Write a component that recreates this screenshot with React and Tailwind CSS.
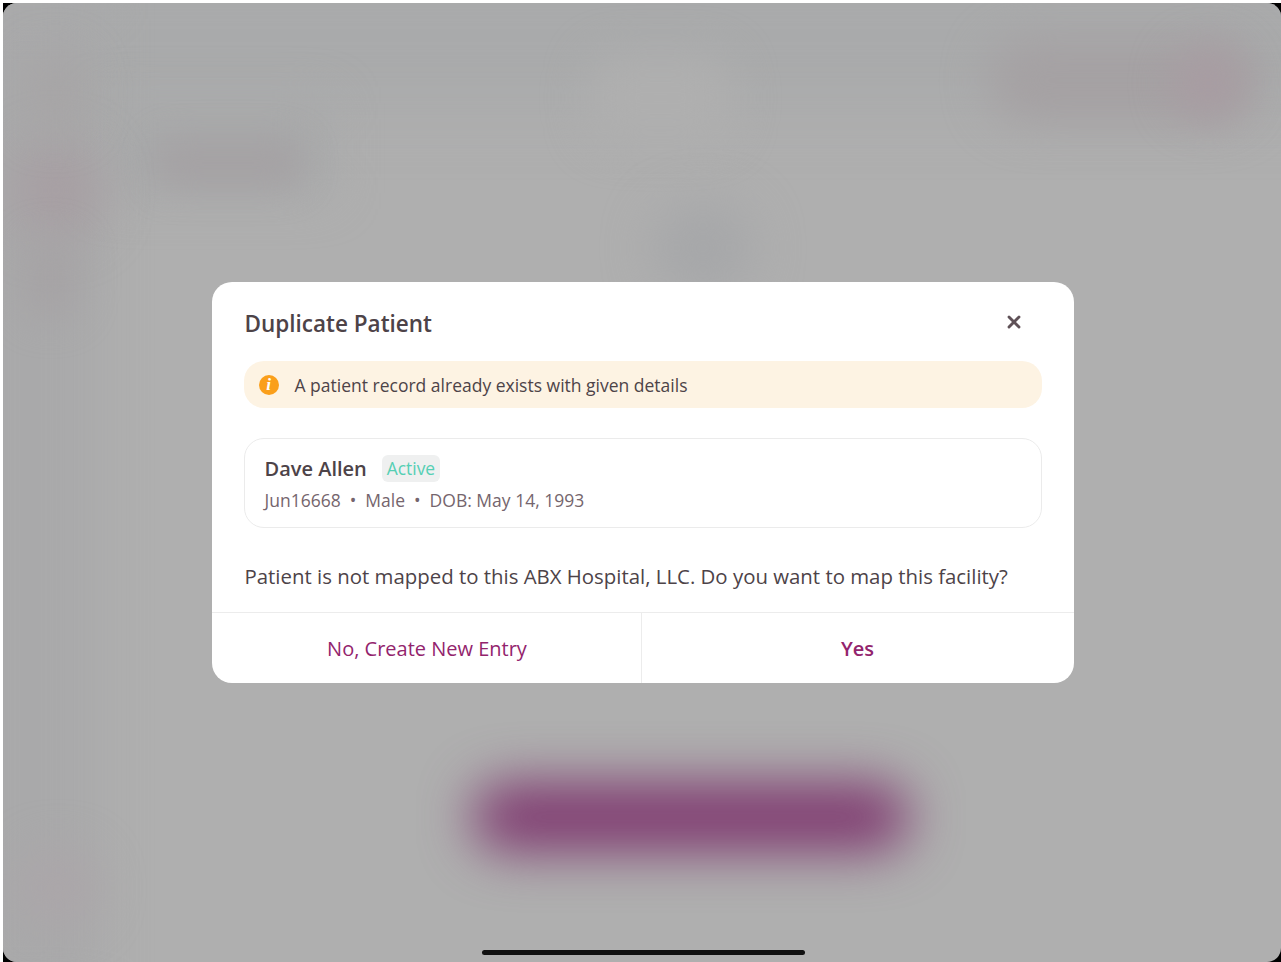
import { X } from 'lucide-react';

function Backdrop() {
	return (
		<div className="absolute inset-0 overflow-hidden">
			{/* Blurred page behind the dialog */}
			<div className="absolute -left-[40px] -top-[40px] h-[145px] w-[1400px] bg-[#a9aaab] blur-[30px]" />
			<div className="absolute left-[585px] top-[50px] h-[90px] w-[145px] rounded-[30px] bg-[#afafaf] blur-[20px]" />
			<div className="absolute -left-[40px] top-0 h-[1000px] w-[135px] bg-[#a9a9aa] blur-[24px]" />
			<div className="absolute left-[100px] top-[100px] h-[90px] w-[225px] bg-[#a8a9aa] blur-[24px]" />
			<div className="absolute left-[150px] top-[135px] h-[50px] w-[150px] rounded-full bg-[#a5a2a4] blur-[16px]" />
			<div className="absolute left-[8px] top-[140px] h-[95px] w-[90px] rounded-full bg-[#a79fa3] blur-[24px]" />
			<div className="absolute left-[22px] top-[50px] h-[80px] w-[60px] rounded-full bg-[#a7a5a6] blur-[20px]" />
			<div className="absolute left-[20px] top-[235px] h-[80px] w-[55px] rounded-full bg-[#a6a3a5] blur-[18px]" />
			<div className="absolute left-[985px] top-[35px] h-[85px] w-[270px] rounded-full bg-[#a5a1a3] blur-[22px]" />
			<div className="absolute left-[1170px] top-[45px] h-[70px] w-[70px] rounded-full bg-[#a89ca2] blur-[20px]" />
			<div className="absolute left-[650px] top-[200px] h-[90px] w-[100px] rounded-full bg-[#a6a7a9] blur-[24px]" />
			<div className="absolute left-[15px] top-[845px] h-[80px] w-[80px] rounded-full bg-[#aba6a9] blur-[22px]" />
			<div className="absolute left-[470px] top-[780px] h-[68px] w-[436px] rounded-full bg-[#7f3a70] blur-[26px]" />
			<div className="absolute bottom-[7px] left-[479px] h-[5px] w-[323px] rounded-full bg-[#111111]" />
		</div>
	);
}

function InfoIcon() {
	return (
		<span className="flex h-5 w-5 shrink-0 items-center justify-center rounded-full bg-[#fa9f1b] font-['Liberation_Serif',serif] text-[17px] font-bold italic leading-none text-white">
			i
		</span>
	);
}

export default function App() {
	return (
		<div className="h-[962px] w-[1281px] overflow-hidden bg-white pl-[3px] pt-[3px] font-['Open_Sans',sans-serif]">
			<div className="h-full w-full bg-black">
				<div className="relative flex h-full w-full items-start justify-center overflow-hidden rounded-[14px] bg-[#afafaf] pl-[1px] pt-[279px]">
					<Backdrop />

					<div className="relative flex h-[401px] w-[862px] flex-col overflow-hidden rounded-[20px] bg-white">
						{/* Header */}
						<div className="flex h-[79px] items-center justify-between pl-[33px] pr-[50px] pt-[2px]">
							<h2 className="pt-[2px] text-[22.5px] font-semibold text-[#4d4348]">
								Duplicate Patient
							</h2>
							<X className="-mt-[1px] h-[20px] w-[20px] text-[#5f5157]" strokeWidth={3.4} />
						</div>

						{/* Warning banner */}
						<div className="mx-[32px] flex h-[47px] items-center gap-[16px] rounded-[20px] bg-[#fdf3e3] pl-[15px] text-[17.5px] text-[#4d4348]">
							<InfoIcon />
							<span className="pt-[1px]">
								A patient record already exists with given details
							</span>
						</div>

						{/* Patient card */}
						<div className="mx-[32px] mt-[30px] flex h-[90px] flex-col justify-center rounded-[20px] border border-[#ebebeb] pl-[20px] pt-[1px]">
							<div className="flex items-center gap-[15px]">
								<span className="text-[20px] font-semibold text-[#4d4348]">
									Dave Allen
								</span>
								<span className="rounded-[6px] bg-[#eff0f0] px-[5px] py-[1px] text-[17.4px] leading-[25px] text-[#55cfb4]">
									Active
								</span>
							</div>
							<div className="mt-[3px] flex items-center text-[17.5px] text-[#75656d]">
								<span>Jun16668</span>
								<span className="px-[9px]">•</span>
								<span>Male</span>
								<span className="px-[9px]">•</span>
								<span>DOB: May 14, 1993</span>
							</div>
						</div>

						<p className="ml-[33px] mt-[33px] whitespace-nowrap text-[20.4px] text-[#4d4348]">
							Patient is not mapped to this ABX Hospital, LLC. Do you want to map
							this facility?
						</p>

						{/* Actions */}
						<div className="mt-auto flex h-[71px] border-t border-[#ececec] text-[20px] text-[#93246d]">
							<button className="w-[430px] border-r border-[#ececec] pl-[2px] pt-[2px]">
								No, Create New Entry
							</button>
							<button className="flex-1 pt-[2px] font-semibold">Yes</button>
						</div>
					</div>
				</div>
			</div>
		</div>
	);
}
